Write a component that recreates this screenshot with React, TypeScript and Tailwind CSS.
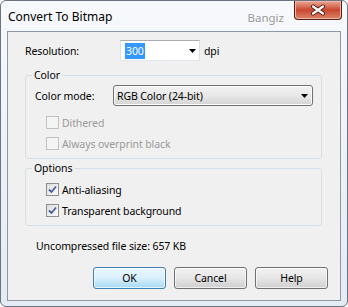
import React from "react";

const font = { fontFamily: '"Segoe UI", "Noto Sans", sans-serif' };

const Arrow: React.FC = () => (
  <svg width="7" height="4" viewBox="0 0 7 4" className="block">
    <path d="M0 0H7L3.5 4Z" fill="#000" />
  </svg>
);

const CheckBox: React.FC<{ label: string; checked?: boolean; disabled?: boolean }> = ({
  label,
  checked,
  disabled,
}) => (
  <div className="flex items-center h-[21px] pl-[20px]">
    <div
      className={
        disabled
          ? "w-[13px] h-[13px] border border-[#c2c2c2] bg-[#f4f4f4]"
          : "w-[13px] h-[13px] border border-[#8e8f8f] bg-gradient-to-br from-[#dcdcdc] to-[#fbfbfb] flex items-center justify-center"
      }
    >
      {checked && (
        <svg width="9" height="9" viewBox="0 0 9 9" className="block">
          <path d="M1 4.5L3.5 7L8 1.5" stroke="#4a5f97" strokeWidth="1.8" fill="none" />
        </svg>
      )}
    </div>
    <span className={disabled ? "ml-[3px] text-[#9a9a9a]" : "ml-[3px] text-black"}>{label}</span>
  </div>
);

const Button: React.FC<{ label: string; primary?: boolean }> = ({ label, primary }) => (
  <div
    className={
      primary
        ? "w-[73px] h-[22px] rounded-[3px] border border-[#3c7fb1] bg-gradient-to-b from-[#eaf6fd] via-[#d9f0fc] to-[#a7d9f5] flex items-center justify-center shadow-[inset_0_0_0_1px_#ffffffaa]"
        : "w-[73px] h-[22px] rounded-[3px] border border-[#707070] bg-gradient-to-b from-[#f2f2f2] via-[#e6e6e6] to-[#cfcfcf] flex items-center justify-center shadow-[inset_0_0_0_1px_#ffffffaa]"
    }
  >
    {label}
  </div>
);

export default function App() {
  return (
    <div
      className="w-[348px] h-[307px] rounded-[6px] border border-[#6b7480] bg-gradient-to-b from-[#f7f9fc] to-[#e4ebf3] flex flex-col text-[12px] leading-[16px] text-black overflow-hidden"
      style={font}
    >
      {/* title bar */}
      <div className="h-[30px] flex items-start pl-[7px] pr-[5px]">
        <span className="mt-[8px]">Convert To Bitmap</span>
        <span className="ml-auto mt-[9px] text-[11.5px] text-[#9a9a9a]">Bangiz</span>
        <div className="ml-[10px] w-[48px] h-[19px] rounded-b-[4px] border border-t-0 border-[#5b1c12] bg-gradient-to-b from-[#e9a897] via-[#c8472d] to-[#d9836c] flex items-center justify-center shadow-[inset_0_0_0_1px_#f0b5a6]">
          <svg width="16" height="12" viewBox="0 0 16 12" className="block">
            <path d="M3 2.5L13 9.5M13 2.5L3 9.5" stroke="#5a1b10" strokeWidth="4" strokeLinecap="round" />
            <path d="M3 2.5L13 9.5M13 2.5L3 9.5" stroke="#fff" strokeWidth="2.2" strokeLinecap="round" />
          </svg>
        </div>
      </div>

      {/* client area */}
      <div className="mx-[6px] h-[270px] border border-[#8d98a4] bg-[#f0f0f0] flex flex-col text-[10.5px] tracking-[-0.1px]">
        <div className="pt-[8px] pl-[17px] pr-[18px]">
          <div className="flex items-center h-[21px]">
            <span className="w-[95px]">Resolution:</span>
            <div className="w-[80px] h-[21px] bg-white border border-[#abadb3] border-x-[#dbdfe6] border-b-[#e3e9ef] flex items-center pl-[4px] pr-[3px]">
              <span className="bg-[#3399ff] text-white px-[1px] h-[16px]">300</span>
              <div className="ml-auto">
                <Arrow />
              </div>
            </div>
            <span className="ml-[4px]">dpi</span>
          </div>

          <fieldset className="mt-[6px] border border-[#d5dfe5] rounded-[3px] pb-[4px]">
            <legend className="ml-[6px] px-[2px] leading-[16px]">Color</legend>
            <div className="flex items-center mt-[2px] pl-[9px] pr-[8px]">
              <span className="w-[78px]">Color mode:</span>
              <div className="w-[200px] h-[21px] rounded-[3px] border border-[#707070] bg-gradient-to-b from-[#f2f2f2] via-[#e8e8e8] to-[#d4d4d4] flex items-center pl-[3px] pr-[4px] shadow-[inset_0_0_0_1px_#fcfcfc]">
                <span>RGB Color (24-bit)</span>
                <div className="ml-auto">
                  <Arrow />
                </div>
              </div>
            </div>
            <div className="mt-[6px]">
              <CheckBox label="Dithered" disabled />
              <CheckBox label="Always overprint black" disabled />
            </div>
          </fieldset>

          <fieldset className="mt-[1px] border border-[#d5dfe5] rounded-[3px] pb-[4px]">
            <legend className="ml-[6px] px-[2px] leading-[16px]">Options</legend>
            <div className="mt-[3px]">
              <CheckBox label="Anti-aliasing" checked />
              <CheckBox label="Transparent background" checked />
            </div>
          </fieldset>

          <div className="mt-[12px] pl-[11px]">Uncompressed file size: 657 KB</div>
        </div>

        <div className="mt-[13px] flex justify-end gap-[8px] pr-[12px]">
          <Button label="OK" primary />
          <Button label="Cancel" />
          <Button label="Help" />
        </div>
      </div>
    </div>
  );
}
